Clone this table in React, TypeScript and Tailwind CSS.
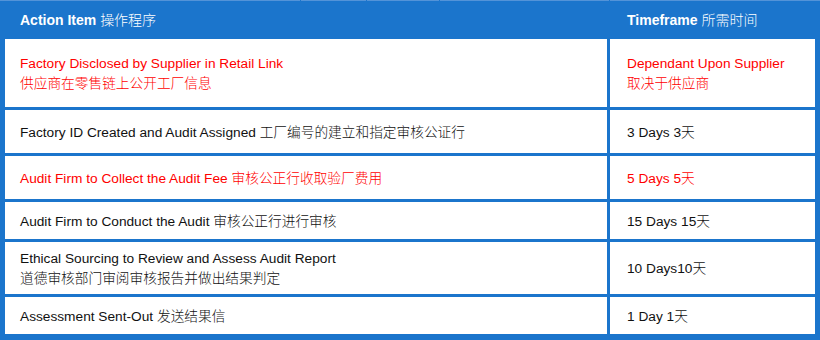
import React from "react";

const font = { fontFamily: '"Liberation Sans", Arial, "Noto Sans CJK SC", sans-serif' };

type Row = { left: React.ReactNode; right: React.ReactNode; red?: boolean; h: string };

const Zh = ({ children }: { children: React.ReactNode }) => (
  <span className="font-light" style={{ fontFamily: '"Noto Sans CJK SC", sans-serif' }}>{children}</span>
);

export default function App() {
  const rows: Row[] = [
    {
      h: "h-[68px]",
      red: true,
      left: (
        <>
          <div>Factory Disclosed by Supplier in Retail Link</div>
          <div><Zh>供应商在零售链上公开工厂信息</Zh></div>
        </>
      ),
      right: (
        <>
          <div>Dependant Upon Supplier</div>
          <div><Zh>取决于供应商</Zh></div>
        </>
      ),
    },
    {
      h: "h-[43px]",
      left: <div>Factory ID Created and Audit Assigned <Zh>工厂编号的建立和指定审核公证行</Zh></div>,
      right: <div>3 Days 3<Zh>天</Zh></div>,
    },
    {
      h: "h-[43px]",
      red: true,
      left: <div>Audit Firm to Collect the Audit Fee <Zh>审核公正行收取验厂费用</Zh></div>,
      right: <div>5 Days 5<Zh>天</Zh></div>,
    },
    {
      h: "h-[37px]",
      left: <div>Audit Firm to Conduct the Audit <Zh>审核公正行进行审核</Zh></div>,
      right: <div>15 Days 15<Zh>天</Zh></div>,
    },
    {
      h: "h-[52px]",
      left: (
        <>
          <div>Ethical Sourcing to Review and Assess Audit Report</div>
          <div><Zh>道德审核部门审阅审核报告并做出结果判定</Zh></div>
        </>
      ),
      right: <div>10 Days10<Zh>天</Zh></div>,
    },
    {
      h: "h-[37px]",
      left: <div>Assessment Sent-Out <Zh>发送结果信</Zh></div>,
      right: <div>1 Day 1<Zh>天</Zh></div>,
    },
  ];

  return (
    <div className="w-[820px] h-[340px] bg-[#1b75cc] overflow-hidden" style={font}>
      <div className="flex h-px gap-px">
        <div className="w-[300px] bg-[#5393d8]" />
        <div className="w-[65px] bg-[#5393d8]" />
        <div className="w-[72px] bg-[#5393d8]" />
        <div className="w-[169px] bg-[#5393d8]" />
        <div className="flex-1 bg-[#5393d8]" />
      </div>
      <div className="grid grid-cols-[602px_205px] gap-x-[3px] px-[5px] h-[38px] items-center text-white text-[14px] leading-[19px]">
        <div className="pl-[15px]"><span className="font-bold">Action Item</span> <Zh>操作程序</Zh></div>
        <div className="pl-[17px]"><span className="font-bold">Timeframe</span> <Zh>所需时间</Zh></div>
      </div>
      <div className="flex flex-col gap-y-[3px] px-[5px]">
        {rows.map((r, i) => (
          <div key={i} className={`grid grid-cols-[602px_205px] gap-x-[3px] ${r.h} text-[13.7px] leading-[19px] ${r.red ? "text-[#ff0000]" : "text-[#111111]"}`}>
            <div className="bg-white pl-[15px] flex flex-col justify-center">{r.left}</div>
            <div className="bg-white pl-[17px] flex flex-col justify-center">{r.right}</div>
          </div>
        ))}
      </div>
    </div>
  );
}
